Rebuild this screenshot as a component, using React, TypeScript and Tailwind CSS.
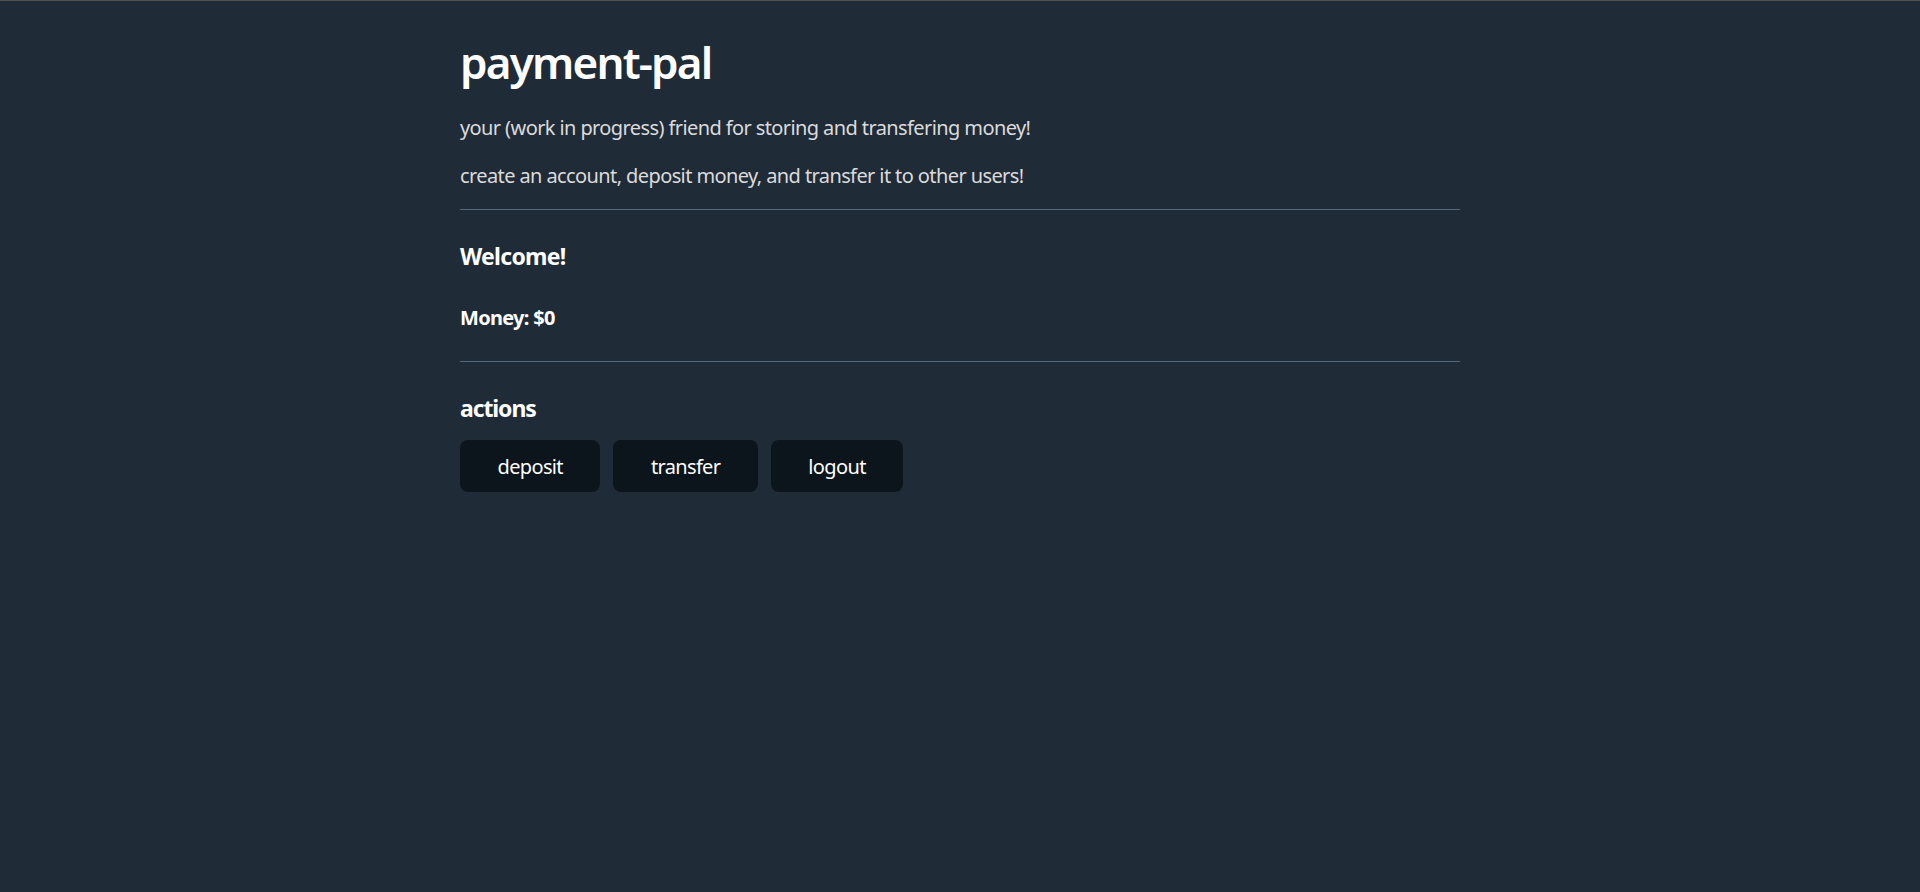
import React from 'react'

const actions = ['deposit', 'transfer', 'logout']

export default function App() {
  return (
    <div className="min-h-screen border-t border-[#525252] bg-[#202b38] font-['Noto_Sans',sans-serif] text-[#dbdbdb]">
      <main className="mx-auto w-[1000px] pt-[30px]">
        <h1 className="text-[44px] leading-[62px] font-semibold tracking-[-1.8px] text-white">payment-pal</h1>

        <p className="mt-[21px] text-[20px] leading-[28px] tracking-[-0.6px]">
          your (work in progress) friend for storing and transfering money!
        </p>
        <p className="mt-[20px] text-[20px] leading-[28px] tracking-[-0.6px]">
          create an account, deposit money, and transfer it to other users!
        </p>

        <hr className="mt-[19px] border-[#526980]" />

        <h3 className="mt-[30px] text-[23px] leading-[32px] font-bold tracking-[-0.7px] text-white">Welcome!</h3>
        <h4 className="mt-[32px] text-[20px] leading-[28px] font-bold tracking-[-0.7px] text-white">Money: $0</h4>

        <hr className="mt-[29px] border-[#526980]" />

        <h3 className="mt-[30px] text-[23px] leading-[32px] font-bold tracking-[-1.1px] text-white">actions</h3>
        <div className="mt-[16px] flex gap-[13px]">
          {actions.map((a) => (
            <button
              key={a}
              className="h-[52px] rounded-lg bg-[#0c151c] px-[37.5px] pt-[2px] text-[20px] tracking-[-0.65px] text-white"
            >
              {a}
            </button>
          ))}
        </div>
      </main>
    </div>
  )
}
